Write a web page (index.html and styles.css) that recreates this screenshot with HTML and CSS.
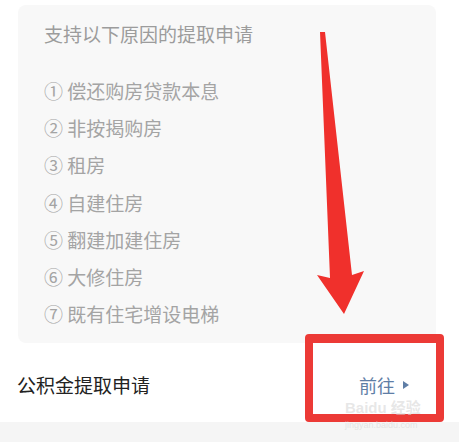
FILE: index.html
```html
<!DOCTYPE html>
<html lang="zh-CN">
<head>
    <meta charset="UTF-8">
    <meta name="viewport" content="width=device-width, initial-scale=1.0">
    <title>公积金提取申请</title>
    <link rel="stylesheet" href="styles.css">
</head>
<body>

<div class="page">
    <div class="reasons">
        <h3>支持以下原因的提取申请</h3>
        <ul class="reason-list">
            <li>① 偿还购房贷款本息</li>
            <li>② 非按揭购房</li>
            <li>③ 租房</li>
            <li>④ 自建住房</li>
            <li>⑤ 翻建加建住房</li>
            <li>⑥ 大修住房</li>
            <li>⑦ 既有住宅增设电梯</li>
        </ul>
    </div>

    <div class="apply-row">
        <span class="apply-title">公积金提取申请</span>
        <a class="apply-link" href="#">前往<span class="caret"></span></a>
    </div>

    <div class="footer-band"></div>

    <!-- annotation: red arrow pointing at the button -->
    <svg class="mark-arrow" width="459" height="442" viewBox="0 0 459 442">
        <polygon points="320,32 325,32 352,275 364,271 344,314 317,275 330,278" fill="#f0302c"/>
    </svg>
    <div class="mark-box"></div>
    <div class="watermark">Baidu 经验<br><small>jingyan.baidu.com</small></div>
</div>

</body>
</html>
```

FILE: styles.css
```css
body {
    margin: 0;
    background-color: #fff;
    font-family: "Noto Sans CJK SC", "Noto Sans", sans-serif;
}
.page {
    position: relative;
    width: 459px;
    height: 442px;
    overflow: hidden;
    padding-top: 5px;
    box-sizing: border-box;
}
.reasons {
    margin-left: 18px;
    width: 418px;
    height: 338px;
    box-sizing: border-box;
    padding: 10px 0 0 26px;
    background-color: #f8f8f8;
    border-radius: 8px;
}
.reasons h3 {
    margin: 0;
    font-size: 19px;
    font-weight: normal;
    line-height: 37px;
    color: #9c9c9c;
}
.reason-list {
    list-style: none;
    margin: 20px 0 0;
    padding: 0;
}
.reason-list li {
    font-size: 19px;
    line-height: 37.2px;
    color: #a4a4a4;
}
.apply-row {
    display: flex;
    align-items: center;
    justify-content: space-between;
    height: 79px;
    padding: 4px 50px 0 17px;
    box-sizing: border-box;
}
.apply-title {
    font-size: 19px;
    color: #222;
}
.apply-link {
    display: flex;
    align-items: center;
    gap: 8px;
    font-size: 18px;
    color: #5f7ea6;
    text-decoration: none;
}
.caret {
    width: 0;
    height: 0;
    border-top: 4px solid transparent;
    border-bottom: 4px solid transparent;
    border-left: 6px solid #5f7ea6;
}
.footer-band {
    height: 20px;
    background-color: #f5f5f5;
}
.mark-arrow {
    position: absolute;
    left: 0;
    top: 0;
}
.mark-box {
    position: absolute;
    left: 305px;
    top: 334px;
    width: 123px;
    height: 71px;
    border: 8px solid #ec3a36;
    border-top-width: 9px;
    border-radius: 4px;
}
.watermark {
    position: absolute;
    left: 345px;
    top: 400px;
    font-family: "Liberation Sans", "Noto Sans CJK SC", sans-serif;
    font-size: 15px;
    line-height: 15px;
    font-weight: bold;
    color: rgba(215, 215, 215, 0.6);
}
.watermark small {
    font-size: 9px;
    font-weight: normal;
}
```
